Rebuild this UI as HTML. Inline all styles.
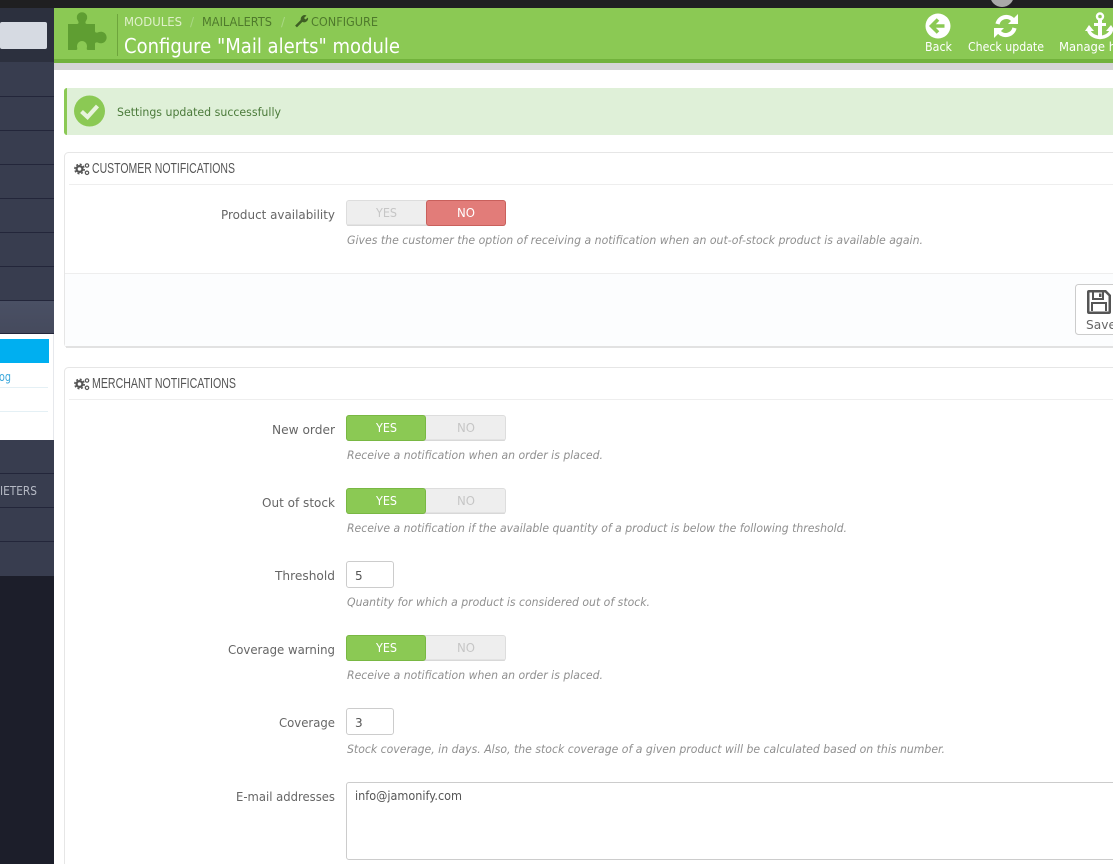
<!DOCTYPE html>
<html lang="en"><head><meta charset="utf-8"><title>Configure "Mail alerts" module</title>
<style>
html,body{margin:0;padding:0;background:#fff;width:1113px;height:864px;overflow:hidden}
svg{display:block}
text{font-family:"DejaVu Sans","Liberation Sans",sans-serif;font-size:12.5px;fill:#666}
.h{font-family:"Liberation Sans Narrow","Liberation Sans",sans-serif;font-size:15px;fill:#555}
.i{font-style:italic;font-size:11.5px;fill:#8f8f8f}
.t{font-size:12px;text-anchor:start}
</style></head><body>
<svg width="1113" height="864" viewBox="0 0 1113 864" xmlns="http://www.w3.org/2000/svg">
<defs>
<linearGradient id="act" x1="0" y1="0" x2="0" y2="1"><stop offset="0" stop-color="#4a5064"/><stop offset="1" stop-color="#454a5d"/></linearGradient>
<g id="cogs" fill="none" stroke="#555">
<circle cx="5.500" cy="6" r="2.900" stroke-width="2.200"/><circle cx="5.500" cy="6" r="4.700" stroke-width="1.500" stroke-dasharray="2 1.700"/>
<circle cx="13" cy="2.500" r="1.700" stroke-width="1.200"/><circle cx="13" cy="9.800" r="1.700" stroke-width="1.200"/>
</g>
<g id="sw"><rect x=".5" y=".5" width="159" height="25" rx="2.500" fill="#eee" stroke="#ddd"/><rect x="1" y="24.500" width="158" height="1.500" rx=".7" fill="#d8d8d8"/></g>
</defs>
<rect width="1113" height="8" fill="#1f1f21"/>
<circle cx="1002" cy="-5" r="12" fill="#a9a9a9"/>
<rect y="8" width="54" height="856" fill="#1c1e2a"/>
<rect y="8" width="54" height="54" fill="#2c303e"/>
<rect y="22" width="47" height="27" rx="2" fill="#d6dae2"/>
<rect y="62" width="54" height="238" fill="#383d4f"/>
<g fill="#23263a"><rect y="96" width="54" height="1"/><rect y="130" width="54" height="1"/><rect y="164" width="54" height="1"/><rect y="198" width="54" height="1"/><rect y="232" width="54" height="1"/><rect y="266" width="54" height="1"/><rect y="300" width="54" height="1"/></g>
<rect y="301" width="54" height="33" fill="url(#act)"/>
<rect y="333" width="54" height="1" fill="#23263a"/>
<rect y="334" width="54" height="106" fill="#fff"/>
<rect x="53" y="334" width="1" height="106" fill="#e6e8ec"/>
<rect y="339" width="49" height="24" fill="#00aff0"/>
<rect y="387" width="48" height="1" fill="#e4f0f5"/><rect y="411" width="48" height="1" fill="#e4f0f5"/>
<text x="-1" y="381" style="fill:#3ba8dc;font-size:12.500px" textLength="12" lengthAdjust="spacingAndGlyphs">og</text>
<rect y="440" width="54" height="136" fill="#383d4f"/>
<g fill="#23263a"><rect y="473" width="54" height="1"/><rect y="507" width="54" height="1"/><rect y="541" width="54" height="1"/></g>
<text x="0" y="495" style="fill:#b5b9c4;font-size:12px" textLength="37" lengthAdjust="spacingAndGlyphs">IETERS</text>

<rect x="54" y="8" width="1059" height="51" fill="#8bc954"/>
<rect x="54" y="59" width="1059" height="4" fill="#72b23c"/>
<rect x="54" y="63" width="1059" height="7" fill="#d5d5d5"/>
<path fill="#5f9e32" d="M68 24H77C79 24 79 22 77.500 20A5.200 5.200 0 1 1 86.500 20C85 22 85 24 87 24H95V31C95 33 97 33 99 32A5.800 5.800 0 1 1 99 43C97 42 95 42 95 44V50H88C86 50 87 48 87 46A5 5 0 1 0 77 46C77 48 78 50 76 50H68Z"/>
<rect x="117" y="14" width="1" height="42" fill="#6ea53c"/>
<text class="t" x="124" y="26" style="fill:#dff0c9" textLength="58" lengthAdjust="spacingAndGlyphs">MODULES</text>
<text class="t" x="190" y="26" style="fill:#a9d884">/</text>
<text class="t" x="202" y="26" style="fill:#4f7a2c" textLength="70" lengthAdjust="spacingAndGlyphs">MAILALERTS</text>
<text class="t" x="281" y="26" style="fill:#a9d884">/</text>
<path d="M296 26.500L303 19.500" stroke="#3f5f24" stroke-width="2.600" fill="none"/><path d="M301 20.500A4 4 0 0 1 306.500 15.500L304 18L305.500 19.500L308 17.500A4 4 0 0 1 302.500 22Z" fill="#3f5f24"/>
<text class="t" x="311" y="26" style="fill:#4f7a2c" textLength="67" lengthAdjust="spacingAndGlyphs">CONFIGURE</text>
<text x="124" y="53" style="fill:#fff;font-size:20px" textLength="276" lengthAdjust="spacingAndGlyphs">Configure "Mail alerts" module</text>

<circle cx="938" cy="26" r="12.500" fill="#fff"/>
<path d="M944.500 26H933M938 19.500L931.500 26L938 32.500" fill="none" stroke="#8bc954" stroke-width="3.600"/>
<text x="925" y="51" style="fill:#fff;font-size:12px" textLength="27" lengthAdjust="spacingAndGlyphs">Back</text>
<g fill="none" stroke="#fff" stroke-width="4.200"><path d="M997.500 24A9 9 0 0 1 1013 20"/><path d="M1014.500 28A9 9 0 0 1 999 32"/></g>
<path fill="#fff" d="M1018 14V24H1008ZM994 38V28H1004Z"/>
<text x="968" y="51" style="fill:#fff;font-size:12px" textLength="76" lengthAdjust="spacingAndGlyphs">Check update</text>
<g fill="none" stroke="#fff"><circle cx="1100" cy="16.500" r="3" stroke-width="2.400"/><path d="M1100 20V37" stroke-width="4"/><path d="M1094 24.500H1106" stroke-width="3"/><path d="M1088.500 29C1089 34 1094 37 1100 37.500C1106 37 1111 34 1111.500 29" stroke-width="3.600"/></g>
<path fill="#fff" d="M1085 31L1089 25L1094 31ZM1106 31L1111 25L1115 31Z"/>
<text x="1059" y="51" style="fill:#fff;font-size:12px" textLength="84" lengthAdjust="spacingAndGlyphs">Manage hooks</text>

<rect x="64" y="88" width="1060" height="47" rx="3" fill="#dff0d8"/>
<path d="M67 88H67A3 3 0 0 0 64 91V132A3 3 0 0 0 67 135Z" fill="#8bc954"/>
<circle cx="89.500" cy="111" r="15.500" fill="#8bc954"/>
<path d="M81.500 111.500L87.500 117L97.500 106" fill="none" stroke="#e8f4dc" stroke-width="4.200"/>
<text x="117" y="116" style="fill:#4b7a3a;font-size:11.500px" textLength="164" lengthAdjust="spacingAndGlyphs">Settings updated successfully</text>

<rect x="64.500" y="152.500" width="1070" height="195" rx="4" fill="#fff" stroke="#e6e6e6"/>
<rect x="66" y="346" width="1047" height="2" fill="#e2e2e2"/>
<rect x="69" y="184" width="1044" height="1" fill="#eeeeee"/>
<use href="#cogs" x="74" y="163"/>
<text class="h" x="92" y="173" textLength="143" lengthAdjust="spacingAndGlyphs">CUSTOMER NOTIFICATIONS</text>
<text x="221" y="219" textLength="114" lengthAdjust="spacingAndGlyphs">Product availability</text>
<use href="#sw" x="346" y="200"/>
<rect x="426.500" y="200.500" width="79" height="25" rx="2.500" fill="#e27c79" stroke="#c9605c"/>
<text x="376" y="217" style="fill:#c6c6c6;font-size:12px" textLength="21" lengthAdjust="spacingAndGlyphs">YES</text>
<text x="457" y="217" style="fill:#fff;font-size:12px" textLength="18" lengthAdjust="spacingAndGlyphs">NO</text>
<text class="i" x="347" y="244" textLength="576" lengthAdjust="spacingAndGlyphs">Gives the customer the option of receiving a notification when an out-of-stock product is available again.</text>
<rect x="65" y="274" width="1048" height="72" fill="#fcfdfe"/>
<rect x="65" y="273" width="1048" height="1" fill="#eeeeee"/>
<rect x="1075.500" y="284.500" width="60" height="50" rx="3" fill="#fff" stroke="#ccc"/>
<path fill="#555" fill-rule="evenodd" d="M1089 290H1106L1111 295V312A2 2 0 0 1 1109 314H1089A2 2 0 0 1 1087 312V292A2 2 0 0 1 1089 290ZM1089.500 292.500V311.500H1108.500V296L1105 292.500H1104V300H1092V292.500ZM1094 292.500V298H1102V292.500ZM1099 293.500H1101.500V297H1099Z"/>
<rect x="1091" y="302" width="16" height="2" fill="#555"/><rect x="1091" y="302" width="2" height="9" fill="#555"/><rect x="1105" y="302" width="2" height="9" fill="#555"/>
<text x="1086" y="329" style="fill:#666;font-size:12px" textLength="30" lengthAdjust="spacingAndGlyphs">Save</text>

<rect x="64.500" y="367.500" width="1070" height="520" rx="4" fill="#fff" stroke="#e6e6e6"/>
<rect x="69" y="399" width="1044" height="1" fill="#eeeeee"/>
<use href="#cogs" x="74" y="378"/>
<text class="h" x="92" y="388" textLength="144" lengthAdjust="spacingAndGlyphs">MERCHANT NOTIFICATIONS</text>

<text x="272" y="434" textLength="63" lengthAdjust="spacingAndGlyphs">New order</text>
<use href="#sw" x="346" y="415"/><rect x="346.500" y="415.500" width="79" height="25" rx="2.500" fill="#8bc954" stroke="#79b843"/>
<text x="376" y="432" style="fill:#fff;font-size:12px" textLength="21" lengthAdjust="spacingAndGlyphs">YES</text>
<text x="457" y="432" style="fill:#c6c6c6;font-size:12px" textLength="18" lengthAdjust="spacingAndGlyphs">NO</text>
<text class="i" x="347" y="459" textLength="256" lengthAdjust="spacingAndGlyphs">Receive a notification when an order is placed.</text>

<text x="262" y="507" textLength="73" lengthAdjust="spacingAndGlyphs">Out of stock</text>
<use href="#sw" x="346" y="488"/><rect x="346.500" y="488.500" width="79" height="25" rx="2.500" fill="#8bc954" stroke="#79b843"/>
<text x="376" y="505" style="fill:#fff;font-size:12px" textLength="21" lengthAdjust="spacingAndGlyphs">YES</text>
<text x="457" y="505" style="fill:#c6c6c6;font-size:12px" textLength="18" lengthAdjust="spacingAndGlyphs">NO</text>
<text class="i" x="347" y="532" textLength="500" lengthAdjust="spacingAndGlyphs">Receive a notification if the available quantity of a product is below the following threshold.</text>

<text x="275" y="580" textLength="60" lengthAdjust="spacingAndGlyphs">Threshold</text>
<rect x="346.500" y="561.500" width="47" height="26" rx="2.500" fill="#fff" stroke="#ccc"/>
<text x="355" y="580" style="fill:#555;font-size:12px">5</text>
<text class="i" x="347" y="606" textLength="303" lengthAdjust="spacingAndGlyphs">Quantity for which a product is considered out of stock.</text>

<text x="228" y="654" textLength="107" lengthAdjust="spacingAndGlyphs">Coverage warning</text>
<use href="#sw" x="346" y="635"/><rect x="346.500" y="635.500" width="79" height="25" rx="2.500" fill="#8bc954" stroke="#79b843"/>
<text x="376" y="652" style="fill:#fff;font-size:12px" textLength="21" lengthAdjust="spacingAndGlyphs">YES</text>
<text x="457" y="652" style="fill:#c6c6c6;font-size:12px" textLength="18" lengthAdjust="spacingAndGlyphs">NO</text>
<text class="i" x="347" y="679" textLength="256" lengthAdjust="spacingAndGlyphs">Receive a notification when an order is placed.</text>

<text x="279" y="727" textLength="56" lengthAdjust="spacingAndGlyphs">Coverage</text>
<rect x="346.500" y="708.500" width="47" height="26" rx="2.500" fill="#fff" stroke="#ccc"/>
<text x="355" y="727" style="fill:#555;font-size:12px">3</text>
<text class="i" x="347" y="753" textLength="598" lengthAdjust="spacingAndGlyphs">Stock coverage, in days. Also, the stock coverage of a given product will be calculated based on this number.</text>

<text x="236" y="801" textLength="99" lengthAdjust="spacingAndGlyphs">E-mail addresses</text>
<rect x="346.500" y="782.500" width="800" height="77" rx="2.500" fill="#fff" stroke="#ccc"/>
<text x="355" y="800" style="fill:#555;font-size:12px" textLength="107" lengthAdjust="spacingAndGlyphs">info@jamonify.com</text>
</svg>
</body></html>
